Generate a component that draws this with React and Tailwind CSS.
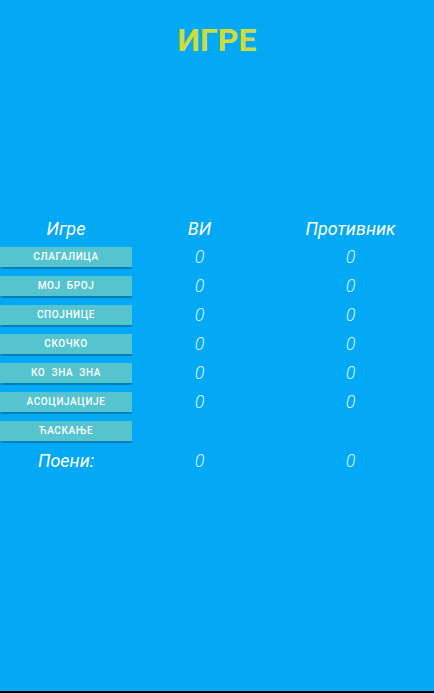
import React from "react";

const games = [
  "СЛАГАЛИЦА",
  "МОЈ  БРОЈ",
  "СПОЈНИЦЕ",
  "СКОЧКО",
  "КО  ЗНА  ЗНА",
  "АСОЦИЈАЦИЈЕ",
  "ЋАСКАЊЕ",
];

const scores = [
  [0, 0],
  [0, 0],
  [0, 0],
  [0, 0],
  [0, 0],
  [0, 0],
  null,
];

const App = () => {
  return (
    <div
      className="h-[693px] w-full bg-[#03a9f4] border-b-2 border-black flex flex-col"
      style={{ fontFamily: "Roboto, 'Noto Sans', sans-serif" }}
    >
      {/* TITLE */}
      <h1 className="pt-6 text-center text-[32px] leading-none font-bold text-[#cddc39]">
        ИГРЕ
      </h1>

      {/* TABLE */}
      <div className="mt-[164px] flex flex-col">
        <div className="flex h-[18px] text-[18px] leading-[18px] italic text-white">
          <div className="w-[132px] text-center">Игре</div>
          <div className="w-[135px] text-center">ВИ</div>
          <div className="flex-1 text-center">Противник</div>
        </div>

        <div className="mt-[9px] flex flex-col gap-[9px]">
          {games.map((game, i) => (
            <div key={game} className="flex h-[20px] items-center">
              <button className="w-[132px] h-[20px] bg-[#55c4cf] shadow-[0_1.5px_1px_rgba(0,0,0,0.25)] text-[10px] font-medium tracking-[0.6px] text-white whitespace-pre leading-none">
                {game}
              </button>
              <div className="w-[135px] text-center text-[18px] leading-none italic font-light text-[#d8f1ff]">
                {scores[i] ? scores[i][0] : ""}
              </div>
              <div className="flex-1 text-center text-[18px] leading-none italic font-light text-[#d8f1ff]">
                {scores[i] ? scores[i][1] : ""}
              </div>
            </div>
          ))}
        </div>

        <div className="mt-[11px] flex h-[18px] items-center leading-[18px]">
          <div className="w-[132px] text-center text-[18px] italic text-white">
            Поени:
          </div>
          <div className="w-[135px] text-center text-[18px] italic font-light text-[#d8f1ff]">
            0
          </div>
          <div className="flex-1 text-center text-[18px] italic font-light text-[#d8f1ff]">
            0
          </div>
        </div>
      </div>
    </div>
  );
};

export default App;
